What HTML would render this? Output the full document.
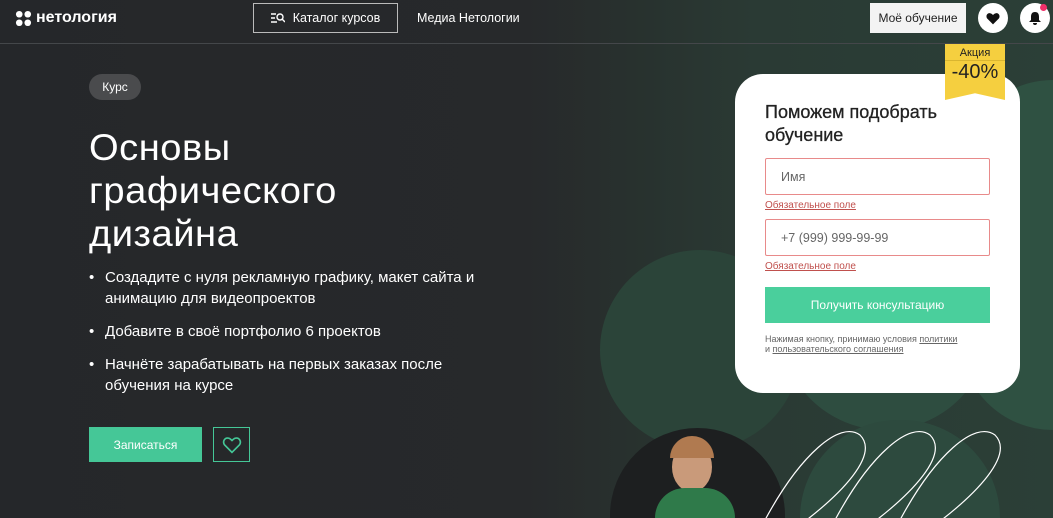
<!DOCTYPE html>
<html><head><meta charset="utf-8"><style>
*{margin:0;padding:0;box-sizing:border-box}
html,body{width:1053px;height:518px;overflow:hidden}
body{font-family:"Liberation Sans",sans-serif;background:#26282b;color:#fff}
.wrap{position:relative;width:1053px;height:518px;overflow:hidden}
.bg{position:absolute;left:0;top:0;width:1053px;height:518px;background:linear-gradient(90deg,#25272a 0%,#27292b 50%,#28312e 60%,#2a3a34 72%,#2b3f37 100%)}
.c{position:absolute;border-radius:50%;background:#2e4e41}
.hdr{position:absolute;left:0;top:0;width:1053px;height:44px;border-bottom:1px solid #44474a}
.logo{position:absolute;left:15px;top:9px;font-weight:bold;font-size:16px;display:flex;align-items:center;gap:4px}
.cat{position:absolute;left:253px;top:3px;width:145px;height:30px;border:1px solid #bbb;font-size:12.5px;display:flex;align-items:center;justify-content:center;gap:8px}
.med{position:absolute;left:417px;top:11px;font-size:12.5px}
.my{position:absolute;left:870px;top:3px;width:96px;height:30px;background:#f3f3f3;color:#222;font-size:12px;display:flex;align-items:center;justify-content:center}
.ic{position:absolute;top:3px;width:30px;height:30px;border-radius:50%;background:#fff;display:flex;align-items:center;justify-content:center;color:#111}
.tag{position:absolute;left:89px;top:74px;width:52px;height:26px;border-radius:13px;background:#4a4b4d;font-size:12px;display:flex;align-items:center;justify-content:center}
h1{position:absolute;left:89px;top:126px;font-size:37px;line-height:43px;font-weight:normal;letter-spacing:0.5px;transform:scaleX(1.03);transform-origin:left}
ul{position:absolute;left:89px;top:267px;list-style:none;font-size:15px;line-height:21px;width:400px}
li{padding-left:16px;position:relative;margin-bottom:12px}
li:before{content:"•";position:absolute;left:0}
.btn{position:absolute;left:89px;top:427px;width:113px;height:35px;background:#45c797;font-size:12px;display:flex;align-items:center;justify-content:center}
.fav{position:absolute;left:213px;top:427px;width:37px;height:35px;border:1px solid #45c797;display:flex;align-items:center;justify-content:center}
.card{position:absolute;left:735px;top:74px;width:285px;height:319px;background:#fff;border-radius:28px;color:#222}
.card h2{position:absolute;left:30px;top:27px;font-size:18px;line-height:23px;font-weight:normal;-webkit-text-stroke:0.3px #222}
.in{position:absolute;left:30px;width:225px;height:37px;border:1px solid #e88a8a;border-radius:2px;font-size:12.5px;color:#666;padding-left:15px;display:flex;align-items:center}
.er{position:absolute;left:30px;font-size:10px;color:#c0504d;text-decoration:underline}
.sub{position:absolute;left:30px;top:213px;width:225px;height:36px;background:#4acf9c;color:#fff;font-size:12px;display:flex;align-items:center;justify-content:center}
.note{position:absolute;left:30px;top:260px;font-size:9px;line-height:10px;color:#666}
.badge{position:absolute;left:945px;top:44px;width:60px;height:56px;background:#f5cf3f;color:#222;clip-path:polygon(0 0,100% 0,100% 100%,50% 88%,0 100%)}
.photo{position:absolute;left:610px;top:428px;width:175px;height:90px;border-radius:88px 88px 0 0;background:#1d1f20;overflow:hidden}
</style></head><body><div class="wrap">
<div class="bg"></div>
<div class="c" style="left:600px;top:250px;width:200px;height:200px;background:#2b4439"></div>
<div class="c" style="left:780px;top:220px;width:210px;height:210px;background:#2e4d40"></div>
<div class="c" style="left:960px;top:80px;width:93px;height:350px;border-radius:175px 0 0 175px;background:#2f5142"></div>
<div class="c" style="left:800px;top:420px;width:200px;height:98px;border-radius:100px 100px 0 0;background:#2d4a3e"></div>
<div class="photo">
<div style="position:absolute;left:62px;top:14px;width:40px;height:50px;border-radius:50%;background:#c99a7a"></div>
<div style="position:absolute;left:60px;top:8px;width:44px;height:22px;border-radius:22px 22px 0 0;background:#b07a50"></div>
<div style="position:absolute;left:45px;top:60px;width:80px;height:30px;border-radius:30px 30px 0 0;background:#2f7a4a"></div>
</div>
<svg style="position:absolute;left:760px;top:425px" width="293" height="93" fill="none" stroke="#fff" stroke-width="1.2">
<path d="M5 95 C40 30 80 -5 100 10 C120 30 80 70 40 100"/>
<path d="M75 95 C110 30 150 -5 170 10 C190 30 150 70 110 100"/>
<path d="M140 95 C175 30 215 -5 235 10 C255 30 215 70 175 100"/>
</svg>
<div class="hdr"></div>
<div class="logo"><svg width="17" height="17" viewBox="0 0 18 18" fill="#fff"><circle cx="4.5" cy="4.5" r="3.5"/><circle cx="13.5" cy="4.5" r="3.5"/><circle cx="4.5" cy="13.5" r="3.5"/><circle cx="13.5" cy="13.5" r="3.5"/></svg>нетология</div>
<div class="cat"><svg width="14" height="12" fill="none" stroke="#fff" stroke-width="1.4"><path d="M0 2h5M0 6h4M0 10h6"/><circle cx="9" cy="5" r="3"/><path d="M11 7l3 3"/></svg>Каталог курсов</div>
<div class="med">Медиа Нетологии</div>
<div class="my">Моё обучение</div>
<div class="ic" style="left:978px"><svg width="14" height="13" viewBox="0 0 24 22"><path d="M12 21L2 11C-1 7 2 1 7 2c2 0 4 2 5 3 1-1 3-3 5-3 5-1 8 5 5 9z" fill="#111"/></svg></div>
<div class="ic" style="left:1020px"><svg width="12" height="13" viewBox="0 0 12 13"><path d="M6 0c3 0 4 2 4 5v3l2 2H0l2-2V5c0-3 1-5 4-5z M4 11h4a2 2 0 0 1-4 0z" fill="#111"/></svg></div>
<div style="position:absolute;left:1040px;top:4px;width:7px;height:7px;border-radius:50%;background:#f0306a"></div>
<div class="tag">Курс</div>
<h1>Основы<br>графического<br>дизайна</h1>
<ul><li>Создадите с нуля рекламную графику, макет сайта и анимацию для видеопроектов</li><li>Добавите в своё портфолио 6 проектов</li><li>Начнёте зарабатывать на первых заказах после обучения на курсе</li></ul>
<div class="btn">Записаться</div>
<div class="fav"><svg width="20" height="18" viewBox="0 0 24 22"><path d="M12 20L3 11C0 7 3 2 7 2.5c2 0 4 2 5 3 1-1 3-3 5-3 4-.5 7 4.5 4 8.5z" fill="none" stroke="#45c797" stroke-width="2"/></svg></div>
<div class="card">
<h2>Поможем подобрать<br>обучение</h2>
<div class="in" style="top:84px">Имя</div>
<div class="er" style="top:126px">Обязательное поле</div>
<div class="in" style="top:145px">+7 (999) 999-99-99</div>
<div class="er" style="top:187px">Обязательное поле</div>
<div class="sub">Получить консультацию</div>
<div class="note">Нажимая кнопку, принимаю условия <u>политики</u><br>и <u>пользовательского соглашения</u></div>
</div>
<div class="badge"><div style="text-align:center;font-size:11px;padding-top:3px;border-bottom:1px solid #d9b530;height:17px">Акция</div><div style="text-align:center;font-size:20px;line-height:22px">-40%</div></div>
</div></body></html>
